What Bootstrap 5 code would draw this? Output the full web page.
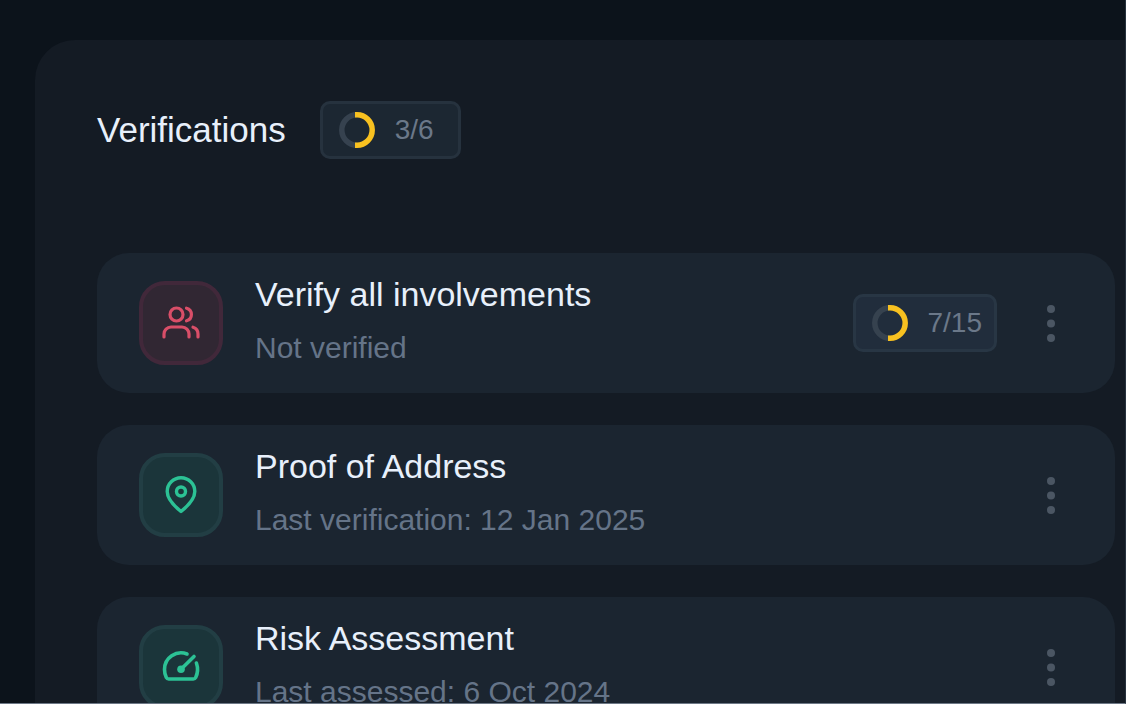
<!DOCTYPE html>
<html lang="en" data-bs-theme="dark">
<head>
<meta charset="utf-8">
<meta name="viewport" content="width=device-width, initial-scale=1">
<title>Verifications</title>
<link href="https://cdn.jsdelivr.net/npm/bootstrap@5.3.0/dist/css/bootstrap.min.css" rel="stylesheet">
<style>
  body { background: #0c131b; color: #e8f0fb; font-family: "Liberation Sans", Arial, sans-serif; }
  .viewport { padding: 40px 0 0 35px; border-right: 1px solid #27323d; border-bottom: 1px solid #6d7886; }
  .panel { background: #141b24; border-radius: 40px 0 0 0; padding: 61px 10px 32px 62px; }
  .panel-head { gap: 34px; margin-bottom: 94px; }
  .panel-title { font-size: 35px; line-height: 54px; color: #e8f0fb; }
  .check-list { gap: 32px; }
  .check { background: #1b2530; border-radius: 32px; padding: 14px 46px 14px 42px; gap: 32px; }
  .check-title { font-size: 34px; line-height: 54px; color: #e8f0fb; }
  .check-note { font-size: 30px; line-height: 54px; color: #657488; }
  .tile { width: 84px; height: 84px; border: 4px solid; border-radius: 26px; }
  .tile-red { background: #312733; border-color: #41283a; color: #d94e68; }
  .tile-green { background: #1b353a; border-color: #223e44; color: #2cc295; }
  .counter { height: 58px; min-width: 141px; padding: 0 12px 0 16px; gap: 20px; border: 3px solid #26323e; border-radius: 10px; background: #1c2732; color: #6b7889; font-size: 28px; line-height: 52px; }
  .check .counter { background: #212d3c; border-color: #283644; }
  .menu-btn { width: 36px; height: 52px; color: #4b5663; }
</style>
</head>
<body>
<main class="viewport vh-100 overflow-hidden">
  <section class="panel">
    <header class="panel-head d-flex align-items-center">
      <h1 class="panel-title fw-normal m-0">Verifications</h1>
      <div class="counter d-flex align-items-center">
        <svg width="36" height="36" viewBox="0 0 36 36" fill="none" stroke-width="5.5" aria-hidden="true"><path d="M18 2.8a15.2 15.2 0 0 0 0 30.4" stroke="#36424f"/><path d="M16 2.8h2a15.2 15.2 0 0 1 0 30.4h-2" stroke="#f8c120"/></svg>
        <span>3/6</span>
      </div>
    </header>
    <ul class="check-list list-unstyled d-flex flex-column m-0">
      <li class="check d-flex align-items-center">
        <div class="tile tile-red d-flex align-items-center justify-content-center flex-shrink-0">
          <svg width="44" height="44" viewBox="0 0 44 44" fill="none" stroke="currentColor" stroke-width="3.2" stroke-linecap="round" stroke-linejoin="round" aria-hidden="true"><circle cx="17.5" cy="13.5" r="6.5"/><path d="M5 36v-3a7 7 0 0 1 7-7h11a7 7 0 0 1 7 7v3M27.500 7.200a6.500 6.500 0 0 1 0 12.600M34 26.200a7 7 0 0 1 5 6.800v3"/></svg>
        </div>
        <div class="flex-grow-1 pb-1">
          <h2 class="check-title fw-normal m-0">Verify all involvements</h2>
          <p class="check-note m-0">Not verified</p>
        </div>
        <div class="counter d-flex align-items-center me-1">
          <svg width="36" height="36" viewBox="0 0 36 36" fill="none" stroke-width="5.5" aria-hidden="true"><path d="M18 2.8a15.2 15.2 0 0 0 0 30.4" stroke="#36424f"/><path d="M16 2.8h2a15.2 15.2 0 0 1 0 30.4h-2" stroke="#f8c120"/></svg>
          <span>7/15</span>
        </div>
        <button type="button" class="menu-btn btn border-0 p-0 d-flex align-items-center justify-content-center" aria-label="Options for Verify all involvements"><svg width="8" height="37" viewBox="0 0 8 37" fill="currentColor" aria-hidden="true"><circle cx="4" cy="4" r="4"/><circle cx="4" cy="18.5" r="4"/><circle cx="4" cy="33" r="4"/></svg></button>
      </li>
      <li class="check d-flex align-items-center">
        <div class="tile tile-green d-flex align-items-center justify-content-center flex-shrink-0">
          <svg width="44" height="44" viewBox="0 0 44 44" fill="none" stroke="currentColor" stroke-width="3.4" stroke-linejoin="round" aria-hidden="true"><path d="M22 38.500C17 34.500 8.200 27 8.200 18.500a13.800 13.800 0 0 1 27.600 0C35.800 27 27 34.500 22 38.500z"/><circle cx="22" cy="18.500" r="4.500"/></svg>
        </div>
        <div class="flex-grow-1 pb-1">
          <h2 class="check-title fw-normal m-0">Proof of Address</h2>
          <p class="check-note m-0">Last verification: 12 Jan 2025</p>
        </div>
        <button type="button" class="menu-btn btn border-0 p-0 d-flex align-items-center justify-content-center" aria-label="Options for Proof of Address"><svg width="8" height="37" viewBox="0 0 8 37" fill="currentColor" aria-hidden="true"><circle cx="4" cy="4" r="4"/><circle cx="4" cy="18.5" r="4"/><circle cx="4" cy="33" r="4"/></svg></button>
      </li>
      <li class="check d-flex align-items-center">
        <div class="tile tile-green d-flex align-items-center justify-content-center flex-shrink-0">
          <svg width="44" height="44" viewBox="0 0 44 44" fill="none" stroke="currentColor" stroke-width="3.6" stroke-linecap="round" stroke-linejoin="round" aria-hidden="true"><path d="M28 9A16.600 16.600 0 0 0 5.500 24.500c0 3.200.6 5.600 1.800 8 .5 1 1.300 1.500 2.400 1.500h24.600c1.100 0 1.900-.5 2.400-1.500 2-4.200 2.400-9.700.7-14.500M22 24.300L35 11.500"/><circle cx="22" cy="24.300" r="3.800" fill="currentColor" stroke="none"/></svg>
        </div>
        <div class="flex-grow-1 pb-1">
          <h2 class="check-title fw-normal m-0">Risk Assessment</h2>
          <p class="check-note m-0">Last assessed: 6 Oct 2024</p>
        </div>
        <button type="button" class="menu-btn btn border-0 p-0 d-flex align-items-center justify-content-center" aria-label="Options for Risk Assessment"><svg width="8" height="37" viewBox="0 0 8 37" fill="currentColor" aria-hidden="true"><circle cx="4" cy="4" r="4"/><circle cx="4" cy="18.5" r="4"/><circle cx="4" cy="33" r="4"/></svg></button>
      </li>
    </ul>
  </section>
</main>
<script src="https://cdn.jsdelivr.net/npm/bootstrap@5.3.0/dist/js/bootstrap.bundle.min.js"></script>
</body>
</html>
